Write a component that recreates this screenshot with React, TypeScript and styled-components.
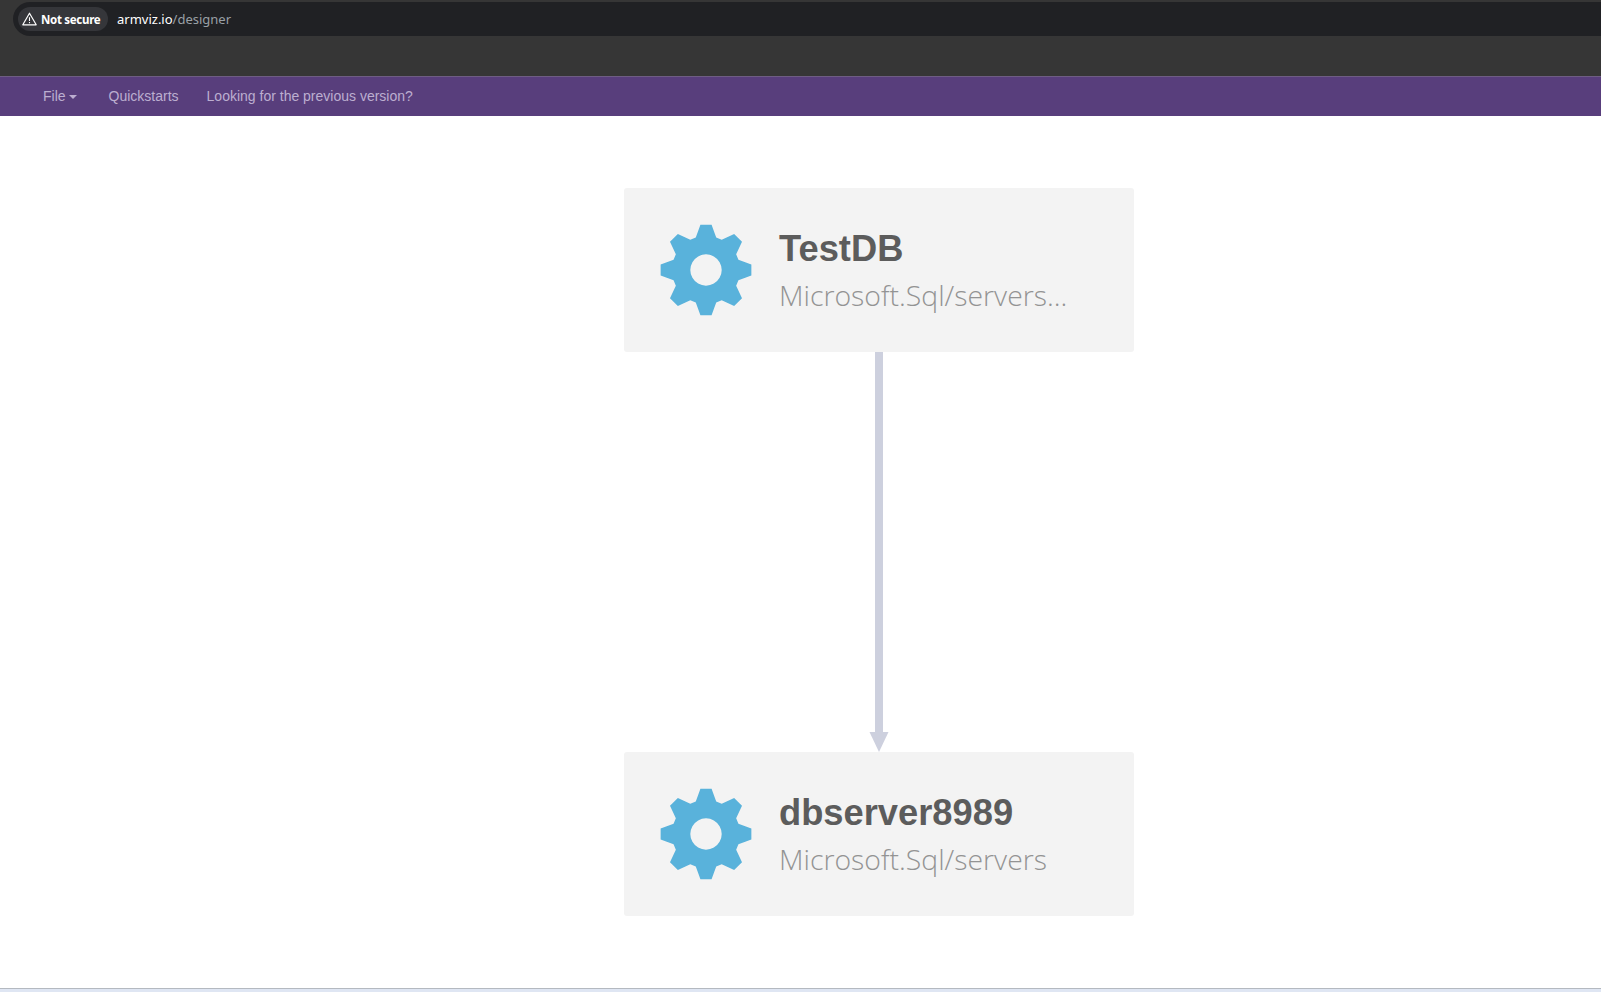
import React from 'react';
import styled, { createGlobalStyle } from 'styled-components';

const GlobalStyle = createGlobalStyle`
  html, body {
    margin: 0;
    padding: 0;
    background: #fff;
  }
`;

const Page = styled.div`
  display: flex;
  flex-direction: column;
  height: 100vh;
  overflow: hidden;
`;

const BrowserChrome = styled.div`
  display: flex;
  flex-direction: column;
  height: 76px;
  padding-top: 2px;
  box-sizing: border-box;
  background: #363636;
`;

const AddressBar = styled.div`
  display: flex;
  align-items: center;
  height: 34px;
  margin-left: 13px;
  padding-left: 5px;
  border-radius: 17px 0 0 17px;
  background: #202124;
`;

const SecurityPill = styled.div`
  display: flex;
  align-items: center;
  gap: 4px;
  width: 90px;
  height: 24px;
  padding-left: 4px;
  box-sizing: border-box;
  border-radius: 12px;
  background: #35363a;
  color: #fff;
  font: 700 11.5px 'Noto Sans', sans-serif;
  letter-spacing: -0.3px;
`;

const Url = styled.div`
  margin-left: 9px;
  color: #fff;
  font: 400 13px 'Noto Sans', sans-serif;
  span {
    color: #9aa0a6;
  }
`;

const NavBar = styled.nav`
  display: flex;
  align-items: center;
  height: 40px;
  padding: 0 0 2px 29px;
  box-sizing: border-box;
  border-top: 1px solid #6e5d83;
  background: #583e7c;
`;

const NavItem = styled.a<{ $wide?: boolean }>`
  display: flex;
  align-items: center;
  padding: 0 ${(p) => (p.$wide ? '18px' : '14px')} 0 14px;
  color: #bcaed0;
  font: 400 14px 'Liberation Sans', Arial, sans-serif;
`;

const Caret = styled.span`
  width: 0;
  height: 0;
  margin-left: 3px;
  margin-top: 2px;
  border-top: 4px solid #bcaed0;
  border-left: 4px solid transparent;
  border-right: 4px solid transparent;
`;

const Canvas = styled.main`
  flex: 1;
  display: flex;
  flex-direction: column;
  align-items: center;
  padding: 72px 0 0 157px;
  background: #fff;
`;

const NodeCard = styled.div`
  display: flex;
  align-items: center;
  width: 510px;
  height: 164px;
  padding-left: 36px;
  box-sizing: border-box;
  border-radius: 3px;
  background: #f3f3f3;
`;

const NodeText = styled.div`
  display: flex;
  flex-direction: column;
  margin: 2px 0 0 27px;
`;

const NodeTitle = styled.div`
  color: #5c5c5c;
  font: 700 36.3px/44px 'Liberation Sans', Arial, sans-serif;
`;

const NodeType = styled.div`
  margin-top: 4px;
  color: #939393;
  font: 300 28.4px/40px 'Open Sans', sans-serif;
`;

const Connector = styled.svg`
  display: block;
  width: 20px;
  height: 400px;
`;

const StatusEdge = styled.div`
  height: 4px;
  box-sizing: border-box;
  border-top: 1px solid #b4b9c0;
  background: #dfe6f3;
`;

// 8 teeth, flat tips, drawn from polar points around the centre
const gearPath = (() => {
  const point = (r: number, deg: number) => {
    const a = ((deg - 90) * Math.PI) / 180;
    return `${(46 + r * Math.cos(a)).toFixed(2)} ${(46 + r * Math.sin(a)).toFixed(2)}`;
  };
  const parts: string[] = [];
  for (let i = 0; i < 8; i++) {
    const c = i * 45;
    parts.push(point(34, c - 17.5), point(45.7, c - 7), point(45.7, c + 7), point(34, c + 17.5));
  }
  return `M${parts.join('L')}Z M46 30.3a15.7 15.7 0 1 0 0.01 0Z`;
})();

function GearIcon() {
  return (
    <svg width="92" height="92" viewBox="0 0 92 92">
      <path d={gearPath} fill="#59b2db" fillRule="evenodd" />
    </svg>
  );
}

function WarningIcon() {
  return (
    <svg width="15" height="14" viewBox="0 0 15 14">
      <path d="M7.5 1.2 14.2 12.8H0.8Z" fill="none" stroke="#fff" strokeWidth="1.2" strokeLinejoin="round" />
      <path d="M7.5 5.2v3.8M7.5 9.9v1.3" stroke="#fff" strokeWidth="1.1" />
    </svg>
  );
}

function Node({ title, type }: { title: string; type: string }) {
  return (
    <NodeCard>
      <GearIcon />
      <NodeText>
        <NodeTitle>{title}</NodeTitle>
        <NodeType>{type}</NodeType>
      </NodeText>
    </NodeCard>
  );
}

export default function App() {
  return (
    <Page>
      <GlobalStyle />
      <BrowserChrome>
        <AddressBar>
          <SecurityPill>
            <WarningIcon />
            Not secure
          </SecurityPill>
          <Url>
            armviz.io<span>/designer</span>
          </Url>
        </AddressBar>
      </BrowserChrome>
      <NavBar>
        <NavItem $wide>
          File
          <Caret />
        </NavItem>
        <NavItem>Quickstarts</NavItem>
        <NavItem>Looking for the previous version?</NavItem>
      </NavBar>
      <Canvas>
        <Node title="TestDB" type="Microsoft.Sql/servers..." />
        <Connector viewBox="0 0 20 400">
          <rect x="6" y="0" width="8" height="382" fill="#cdd0de" />
          <path d="M0.5 380H19.5L10 400Z" fill="#cdd0de" />
        </Connector>
        <Node title="dbserver8989" type="Microsoft.Sql/servers" />
      </Canvas>
      <StatusEdge />
    </Page>
  );
}
